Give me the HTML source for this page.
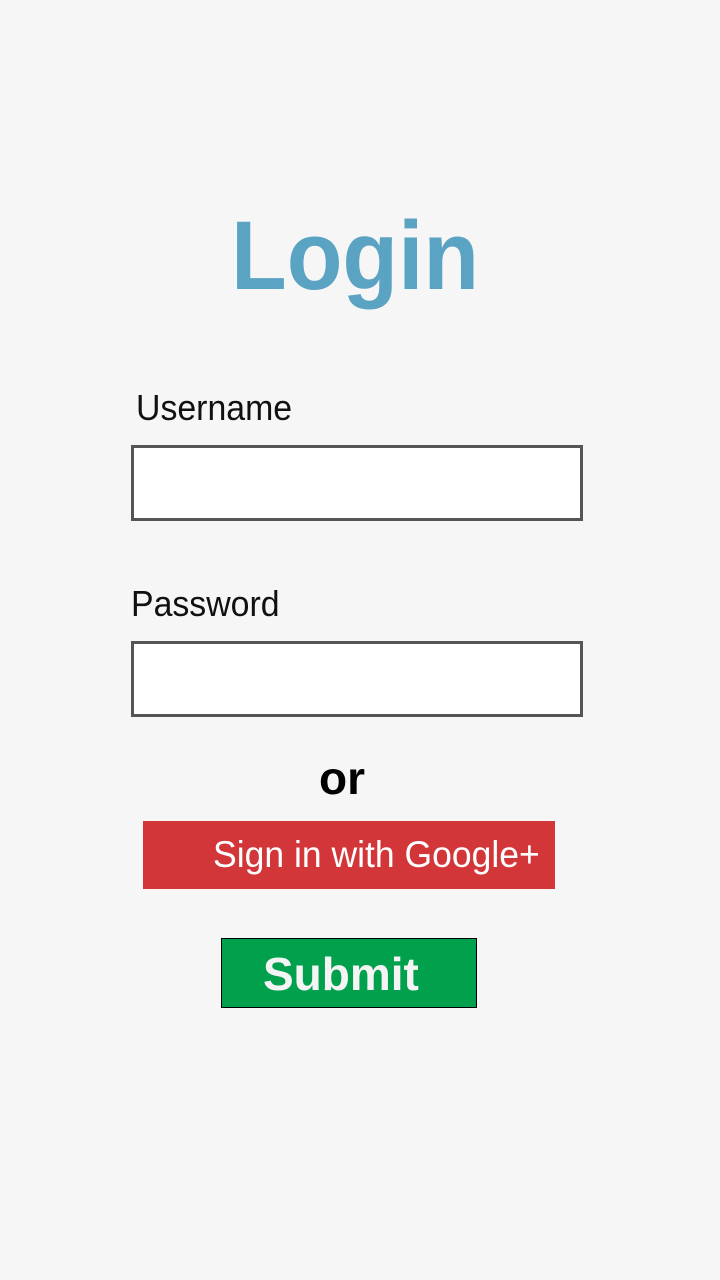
<!DOCTYPE html>
<html><head><meta charset="utf-8"><style>
html,body{margin:0;padding:0;}
body{width:720px;height:1280px;background:#f6f6f6;position:relative;overflow:hidden;font-family:"Liberation Sans",sans-serif;}
.t{position:absolute;white-space:nowrap;line-height:1;}
.box{position:absolute;background:#fff;border:3px solid #555;box-sizing:border-box;}
</style></head><body>
<div class="t" style="left:231px;top:207px;font-size:97px;font-weight:bold;color:#5aa3c3;transform:scaleX(0.94);transform-origin:left top;">Login</div>
<div class="t" style="left:136px;top:390px;font-size:36px;color:#111;transform:scaleX(0.94);transform-origin:left top;">Username</div>
<div class="box" style="left:131px;top:445px;width:452px;height:76px;"></div>
<div class="t" style="left:131px;top:586px;font-size:36px;color:#111;transform:scaleX(0.94);transform-origin:left top;">Password</div>
<div class="box" style="left:131px;top:641px;width:452px;height:76px;"></div>
<div class="t" style="left:319px;top:755px;font-size:46px;font-weight:bold;color:#000;">or</div>
<div style="position:absolute;left:143px;top:821px;width:412px;height:68px;background:#d23639;"></div>
<div class="t" style="left:213px;top:836px;font-size:37px;color:#fff;transform:scaleX(0.96);transform-origin:left top;">Sign in with Google+</div>
<div style="position:absolute;left:221px;top:938px;width:256px;height:70px;background:#00a04d;border:1px solid #000;box-sizing:border-box;"></div>
<div class="t" style="left:263px;top:951px;font-size:46px;font-weight:bold;color:#f4f4f4;">Submit</div>
</body></html>
